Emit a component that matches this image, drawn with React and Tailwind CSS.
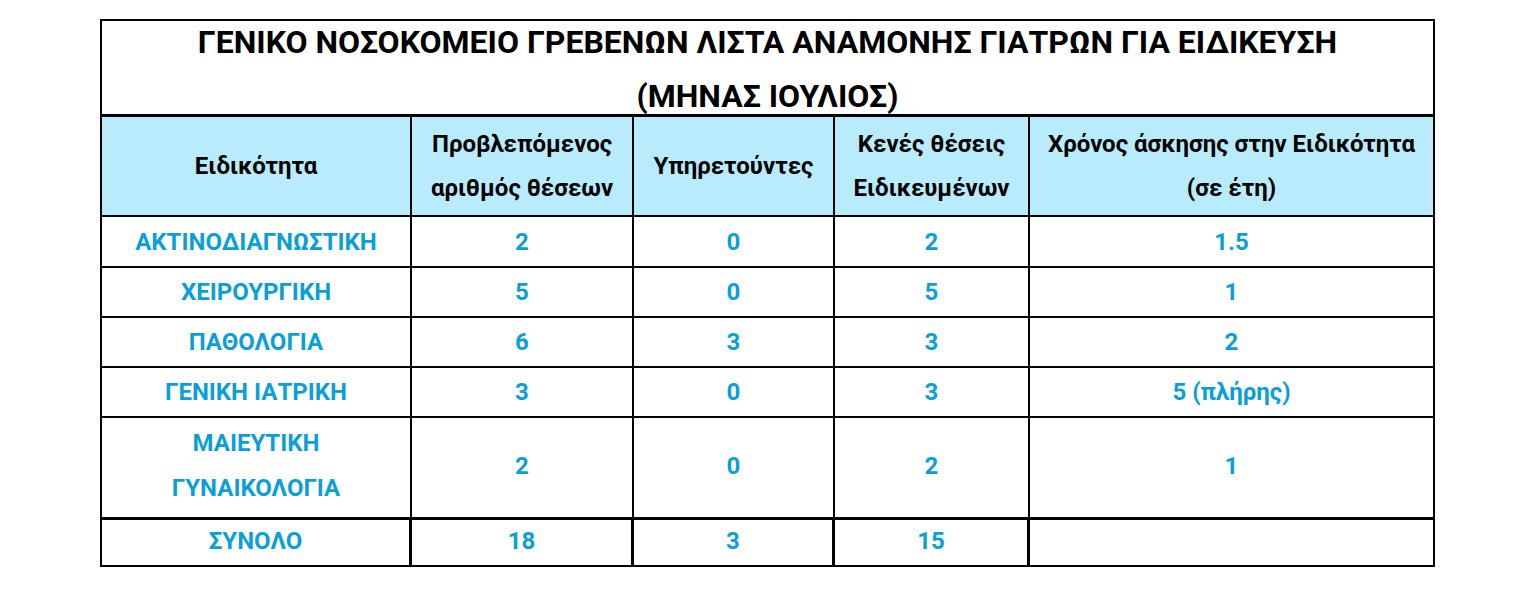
import React from "react";

const rows = [
  ["ΑΚΤΙΝΟΔΙΑΓΝΩΣΤΙΚΗ", "2", "0", "2", "1.5"],
  ["ΧΕΙΡΟΥΡΓΙΚΗ", "5", "0", "5", "1"],
  ["ΠΑΘΟΛΟΓΙΑ", "6", "3", "3", "2"],
  ["ΓΕΝΙΚΗ ΙΑΤΡΙΚΗ", "3", "0", "3", "5 (πλήρης)"],
];

const widths = ["w-[310px]", "w-[222px]", "w-[201px]", "w-[195px]", "w-[403px]"];

function Row({ cells, h, bottom, thick, pad }) {
  return (
    <div className={`flex ${bottom}`}>
      {cells.map((c, i) => (
        <div
          key={i}
          className={`${widths[i]} ${h} ${pad || ""} shrink-0 flex items-center justify-center text-center border-black ${
            i < 4 ? (thick ? "border-r-[3px]" : "border-r-2") : ""
          }`}
        >
          {c}
        </div>
      ))}
    </div>
  );
}

export default function App() {
  return (
    <div
      className="bg-white w-[1535px] h-[602px] pl-[100px] pt-[19px]"
      style={{ fontFamily: "Roboto, 'Noto Sans', sans-serif" }}
    >
      <div className="w-[1335px] border-2 border-black">
        <div className="h-[96px] border-b-[3px] border-black pt-[3px] flex flex-col justify-center text-center font-bold text-[32px] leading-[54px] text-black">
          <div>ΓΕΝΙΚΟ ΝΟΣΟΚΟΜΕΙΟ ΓΡΕΒΕΝΩΝ ΛΙΣΤΑ ΑΝΑΜΟΝΗΣ ΓΙΑΤΡΩΝ ΓΙΑ ΕΙΔΙΚΕΥΣΗ</div>
          <div>(ΜΗΝΑΣ ΙΟΥΛΙΟΣ)</div>
        </div>
        <div className="bg-[#b8ecfc] text-black font-bold text-[24px] leading-[44px]">
          <Row
            h="h-[98px]"
            bottom="border-b-2 border-black"
            cells={[
              "Ειδικότητα",
              <span>
                Προβλεπόμενος
                <br />
                αριθμός θέσεων
              </span>,
              "Υπηρετούντες",
              <span>
                Κενές θέσεις
                <br />
                Ειδικευμένων
              </span>,
              <span>
                Χρόνος άσκησης στην Ειδικότητα
                <br />
                (σε έτη)
              </span>,
            ]}
          />
        </div>
        <div className="text-[#0a9fd9] font-bold text-[24px]">
          {rows.map((r, idx) => (
            <Row
              key={idx}
              h={idx === 0 ? "h-[49px]" : "h-[48px]"}
              bottom="border-b-2 border-black"
              cells={r}
            />
          ))}
          <Row
            h="h-[99px]"
            pad="pb-[3px]"
            bottom="border-b-[3px] border-black"
            cells={[
              <span className="leading-[45px]">
                ΜΑΙΕΥΤΙΚΗ
                <br />
                ΓΥΝΑΙΚΟΛΟΓΙΑ
              </span>,
              "2",
              "0",
              "2",
              "1",
            ]}
          />
          <Row h="h-[45px]" pad="pb-[3px]" bottom="" thick cells={["ΣΥΝΟΛΟ", "18", "3", "15", ""]} />
        </div>
      </div>
    </div>
  );
}
